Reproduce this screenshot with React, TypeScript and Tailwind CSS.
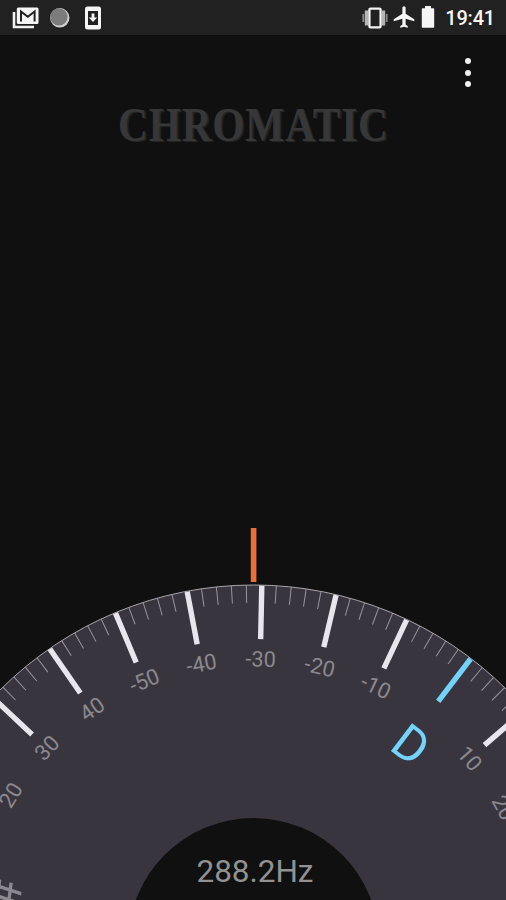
const CX = 253.5;
const CY = 943.5;
const R = 358.5;
const NOTE_ANGLE = 37.25; // where the D mark sits
const STEP = 12; // degrees per 10 cents

const majors = [
  { angle: NOTE_ANGLE - STEP * 10, label: 'C#', note: true },
  { angle: NOTE_ANGLE - STEP * 9, label: '10' },
  { angle: NOTE_ANGLE - STEP * 8, label: '20' },
  { angle: NOTE_ANGLE - STEP * 7, label: '30' },
  { angle: NOTE_ANGLE - STEP * 6, label: '40' },
  { angle: NOTE_ANGLE - STEP * 5, label: '-50' },
  { angle: NOTE_ANGLE - STEP * 4, label: '-40' },
  { angle: NOTE_ANGLE - STEP * 3, label: '-30' },
  { angle: NOTE_ANGLE - STEP * 2, label: '-20' },
  { angle: NOTE_ANGLE - STEP, label: '-10' },
  { angle: NOTE_ANGLE, label: 'D', note: true, active: true },
  { angle: NOTE_ANGLE + STEP, label: '10' },
  { angle: NOTE_ANGLE + STEP * 2, label: '20' },
];

function StatusBar() {
  return (
    <header className="flex h-[35px] shrink-0 items-center justify-between bg-[#212121] pl-3 pr-[11px]">
      <div className="flex items-center">
        {/* Mail */}
        <svg width="28" height="24" viewBox="0 0 28 24">
          <path d="M2 6v15h20" fill="none" stroke="#f2f2f2" strokeWidth="2.600" />
          <rect x="4.800" y="1.500" width="21.700" height="16.500" rx="1.500" fill="#f5f5f5" />
          <path d="M9 15.500V5.500l6.800 5.300 6.800-5.300v10" fill="none" stroke="#212121" strokeWidth="2" />
        </svg>
        {/* Moon */}
        <svg className="ml-[9px]" width="22" height="22" viewBox="0 0 22 22">
          <circle cx="10.800" cy="10.800" r="9.700" fill="#cfcfcf" />
          <circle cx="9.900" cy="9.900" r="8.700" fill="#7c7c7c" />
        </svg>
        {/* Download to device */}
        <svg className="ml-[13px]" width="18" height="24" viewBox="0 0 18 24">
          <rect x="1" y="0.500" width="16" height="23" rx="2.500" fill="#f5f5f5" />
          <rect x="4" y="5" width="10" height="14" fill="#212121" />
          <path d="M7.600 7.500h2.800v4h2.800L9 16l-4.200-4.500h2.800z" fill="#f5f5f5" />
        </svg>
      </div>
      <div className="flex items-center">
        {/* Vibrate */}
        <svg width="26" height="22" viewBox="0 0 26 22">
          <path d="M1.300 7v8M24.700 7v8" stroke="#8a8a8a" strokeWidth="1.700" />
          <path d="M4.500 3.500v15M21.500 3.500v15" stroke="#b5b5b5" strokeWidth="3.400" />
          <rect x="7.400" y="1.600" width="11.200" height="18.800" rx="1.200" fill="#212121" stroke="#f5f5f5" strokeWidth="2.300" />
        </svg>
        {/* Airplane */}
        <svg className="-mt-0.5 ml-[3px]" width="26" height="26" viewBox="0 0 24 24">
          <path d="M21.500 16v-2l-8-5V3.500a1.500 1.500 0 0 0-3 0V9l-8 5v2l8-2.500V19l-2 1.500V22l3.500-1 3.500 1v-1.500L13.500 19v-5.500z" fill="#f5f5f5" />
        </svg>
        {/* Battery */}
        <svg className="-mt-0.5 ml-[4px]" width="14" height="22" viewBox="0 0 14 22">
          <path d="M4 0h6v2.300h2.200c.6 0 1 .4 1 1V20.700c0 .6-.4 1-1 1H1.800c-.6 0-1-.4-1-1V3.300c0-.6.4-1 1-1H4z" fill="#f5f5f5" />
        </svg>
        <span className="ml-[10px] text-[20px] font-medium leading-none tracking-[-0.2px] text-[#f5f5f5]">19:41</span>
      </div>
    </header>
  );
}

function Dial() {
  return (
    <svg className="block" width="506" height="380" viewBox="0 520 506 380">
      <circle cx={CX} cy={CY} r={R} fill="#39353f" stroke="#a9a6ac" strokeWidth="1" />
      {majors.map((m) => (
        <g key={m.angle} transform={`rotate(${m.angle} ${CX} ${CY})`}>
          {[1, 2, 3, 4].map((i) => (
            <line
              key={i}
              x1={CX}
              x2={CX}
              y1={CY - R}
              y2={CY - R + 18}
              stroke="#97949b"
              strokeWidth="1"
              transform={`rotate(${i * 2.4} ${CX} ${CY})`}
            />
          ))}
          <line
            x1={CX + 0.5}
            x2={CX + 0.5}
            y1={CY - R + 0.5}
            y2={CY - R + 54}
            stroke={m.active ? '#73d3fb' : '#e8e5ec'}
            strokeWidth="5.4"
          />
          <text
            x={m.active ? CX + 5 : CX + 1}
            y={m.note ? CY - 236.5 : CY - 277}
            textAnchor="middle"
            fontSize={m.note ? 49 : 21.8}
            fill={m.active ? '#73d3fb' : '#8b888f'}
          >
            {m.label}
          </text>
        </g>
      ))}
      <circle cx={CX} cy={CY} r="125.500" fill="#101010" />
      <text x="255" y="881.500" textAnchor="middle" fontSize="31.500" textLength="117" fill="#929292">
        288.2Hz
      </text>
      {/* Needle */}
      <rect x="250.800" y="528" width="5.600" height="54" fill="#ec6f3b" />
    </svg>
  );
}

export default function App() {
  return (
    <div className="flex h-[900px] w-[506px] flex-col overflow-hidden bg-[#101010] font-['Roboto',sans-serif]">
      <StatusBar />
      <div className="flex h-[64px] shrink-0 justify-end pr-[35px] pt-[23px]">
        <button className="flex h-[29px] w-[6px] flex-col items-center justify-between" aria-label="Menu">
          <span className="size-[6px] rounded-full bg-[#f0f0f0]" />
          <span className="size-[6px] rounded-full bg-[#f0f0f0]" />
          <span className="size-[6px] rounded-full bg-[#f0f0f0]" />
        </button>
      </div>
      <h1 className="flex h-[52px] items-center justify-center whitespace-nowrap font-['Liberation_Serif',serif] text-[48px] font-bold leading-none tracking-[1px] text-[#373737] [text-shadow:2px_1px_1px_#262626]">
        <span className="scale-x-[0.86]">CHROMATIC</span>
      </h1>
      <main className="mt-auto">
        <Dial />
      </main>
    </div>
  );
}
